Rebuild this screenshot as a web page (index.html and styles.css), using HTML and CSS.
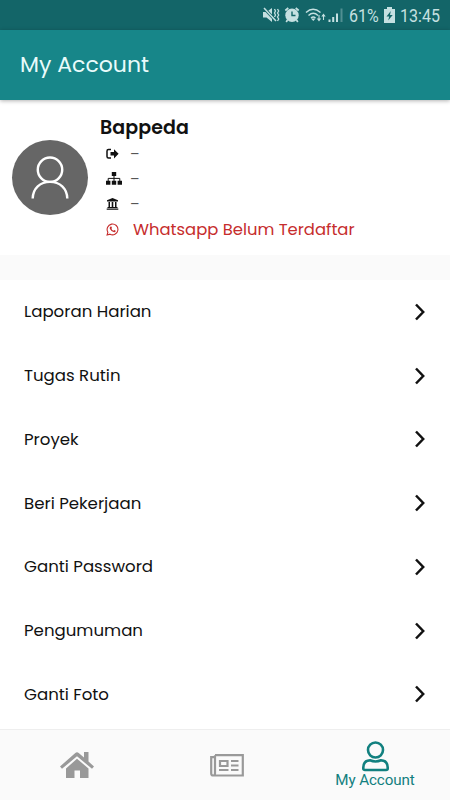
FILE: index.html
```html
<!DOCTYPE html>
<html lang="id">
<head>
    <meta charset="UTF-8">
    <meta name="viewport" content="width=device-width, initial-scale=1.0">
    <title>My Account</title>
    <link rel="stylesheet" href="styles.css">
</head>
<body>

    <!-- Status bar -->
    <div class="status-bar">
        <svg width="80" height="16" viewBox="0 0 80 16" fill="currentColor">
            <path d="M0 5h3.500L9 1v14L3.500 10.500H0z"/>
            <path d="M1 1l12 13" stroke="#136568" stroke-width="3"/>
            <path d="M1 1l12 13" stroke="currentColor" stroke-width="1.500"/>
            <path d="M11.500 2l1 2-1 2 1 2-1 2M14.500 2l1.200 2-1.200 2 1.200 2-1.200 2 1.200 2-1.200 2" fill="none" stroke="currentColor" stroke-width="1.300"/>
            <circle cx="29" cy="8.300" r="6.700"/>
            <path d="M22.300 3.500l3-2.500M35.700 3.500l-3-2.500M24.500 13l-1.300 2M33.500 13l1.300 2" stroke="currentColor" stroke-width="1.700"/>
            <path d="M29 4.500v4h3.500" fill="none" stroke="#136568" stroke-width="1.400"/>
            <path d="M43 5.500q7-6.500 14.500 0M45.500 8.500q4.800-4.500 9.500 0M48 11q2.300-2 4.500 0" fill="none" stroke="currentColor" stroke-width="1.400"/>
            <path d="M48 11.500l2.300 2.500 2.200-2.500z"/>
            <path d="M56 8v4.500M60.500 8v5" stroke="currentColor" stroke-width="1.100"/>
            <path d="M53.800 11.500h4.400L56 14.500zM58.300 9.500h4.400l-2.200-3z"/>
            <path d="M65.500 12.500h2V15h-2zM69.200 10h2v5h-2zM73 6.500h2V15h-2z"/>
            <path d="M77.500 1.500h2V15h-2z" opacity=".35"/>
        </svg>
        <span class="battery-text">61%</span>
        <svg width="11" height="16" viewBox="0 0 11 16">
            <path d="M3 0h5v2h3v14H0V2h3z" fill="currentColor"/>
            <path d="M6.800 4L2.500 9.500h2.700L4.200 13.500 8.700 8H6z" fill="#136568"/>
        </svg>
        <span class="clock">13:45</span>
    </div>

    <header class="header">
        <h1>My Account</h1>
    </header>

    <!-- Profile -->
    <section class="profile">
        <div class="avatar">
            <svg width="38" height="43" viewBox="0 0 38 44" fill="none" stroke="#fff" stroke-width="2.500">
                <circle cx="19" cy="14" r="12.500"/>
                <path d="M1.300 43.500C1.500 33 9 26.500 19 26.500S36.500 33 36.700 43.500"/>
            </svg>
        </div>
        <div class="profile-info">
            <h2>Bappeda</h2>
            <div class="info-row">
                <svg width="13" height="12" viewBox="0 0 13 12">
                    <path d="M5 1.500H2.500Q1 1.500 1 3v5.500Q1 10 2.500 10H5" fill="none" stroke="#111" stroke-width="1.500"/>
                    <path d="M4.500 4H8V1.200l4.600 4.600L8 10.400V7.600H4.500z" fill="#111"/>
                </svg>
                <span>–</span>
            </div>
            <div class="info-row wide-icon">
                <svg width="16" height="13" viewBox="0 0 16 13">
                    <path d="M5.800 0h4.400v4H5.800zM0 8.800h4.400v4H0zM5.800 8.800h4.400v4H5.800zM11.600 8.800H16v4h-4.400z" fill="#111"/>
                    <path d="M8 4v5M2.200 9V6.400h11.600V9" fill="none" stroke="#111"/>
                </svg>
                <span>–</span>
            </div>
            <div class="info-row">
                <svg width="13" height="12" viewBox="0 0 13 12" fill="#111">
                    <path d="M6.500 0L12 2.300v1.200H1V2.300zM2.500 4H4v5.300H2.500zM5.700 4h1.600v5.300H5.700zM9 4h1.500v5.300H9zM1.500 9.100h10v1h-10zM.7 10.600h11.600v1.100H.7z"/>
                </svg>
                <span>–</span>
            </div>
            <div class="info-row whatsapp">
                <svg width="13" height="13" viewBox="0 0 13 13">
                    <path d="M1.100 12l.8-2.800A5.400 5.400 0 1 1 4 11.200z" fill="none" stroke="currentColor" stroke-width="1.100"/>
                    <path d="M4.600 3.400l.8.100.6 1.500-.6.800q.7 1.300 2 1.900l.8-.8 1.500.8q0 1.500-1.600 1.600Q5.400 9.100 3.800 5.800 3.300 4.200 4.600 3.400z" fill="currentColor"/>
                </svg>
                <span>Whatsapp Belum Terdaftar</span>
            </div>
        </div>
    </section>

    <!-- Menu -->
    <ul class="menu">
        <li><span>Laporan Harian</span><svg class="chevron" viewBox="0 0 12 18"><path d="M2 1.500L9.200 9 2 16.500"/></svg></li>
        <li><span>Tugas Rutin</span><svg class="chevron" viewBox="0 0 12 18"><path d="M2 1.500L9.200 9 2 16.500"/></svg></li>
        <li><span>Proyek</span><svg class="chevron" viewBox="0 0 12 18"><path d="M2 1.500L9.200 9 2 16.500"/></svg></li>
        <li><span>Beri Pekerjaan</span><svg class="chevron" viewBox="0 0 12 18"><path d="M2 1.500L9.200 9 2 16.500"/></svg></li>
        <li><span>Ganti Password</span><svg class="chevron" viewBox="0 0 12 18"><path d="M2 1.500L9.200 9 2 16.500"/></svg></li>
        <li><span>Pengumuman</span><svg class="chevron" viewBox="0 0 12 18"><path d="M2 1.500L9.200 9 2 16.500"/></svg></li>
        <li><span>Ganti Foto</span><svg class="chevron" viewBox="0 0 12 18"><path d="M2 1.500L9.200 9 2 16.500"/></svg></li>
    </ul>

    <!-- Bottom navigation -->
    <nav class="bottom-nav">
        <a class="nav-item">
            <svg width="34" height="27" viewBox="0 0 34 27" fill="#999">
                <path d="M15.300 1Q17-.5 18.700 1L24 5.500V0h4.500v9.500L34 14.500l-2 2.300L17 4.300 2 16.800l-2-2.300z"/>
                <path d="M17 6.800l11.500 9.700V26H20v-7.500h-5.500V26H6v-9.500z"/>
            </svg>
        </a>
        <a class="nav-item">
            <svg width="34" height="23" viewBox="0 0 34 23" fill="none" stroke="#999" stroke-width="2.200">
                <path d="M5 1.200h27.800v20.300H3.200Q1.200 21.500 1.200 19.500V3.200H5M5 1.200v18.300Q5 21.500 3.200 21.500"/>
                <path d="M10 7h7.500v5H10zM21 7h7.500M21 11.500h7.500M9 16h9.500M21 16h7.500"/>
            </svg>
        </a>
        <a class="nav-item active">
            <svg width="27" height="31" viewBox="0 0 27 31" fill="none" stroke="currentColor" stroke-width="2.600">
                <circle cx="13.500" cy="9" r="7.500"/>
                <path d="M8 19.300Q13.500 21.700 19 19.300 25.500 19.500 25.700 26.500V27.500Q25.700 29 24 29H3Q1.300 29 1.300 27.500V26.500Q1.500 19.500 8 19.300z"/>
            </svg>
            <span>My Account</span>
        </a>
    </nav>

</body>
</html>
```
FILE: styles.css
```css
* {
    box-sizing: border-box;
}

body {
    margin: 0;
    height: 800px;
    display: flex;
    flex-direction: column;
    overflow: hidden;
    background-color: #fff;
    color: #111;
    font-family: Poppins, Inter, sans-serif;
}

svg {
    display: block;
    flex-shrink: 0;
}

.status-bar {
    height: 30px;
    flex-shrink: 0;
    display: flex;
    align-items: center;
    padding-left: 263px;
    background-color: #136568;
    color: #c5e0e1;
    font: 18px/30px Roboto, sans-serif;
}

.battery-text,
.clock {
    transform: scaleX(0.89);
    transform-origin: left;
    padding-top: 1px;
}

.battery-text {
    width: 35px;
    margin-left: 6px;
}

.clock {
    margin-left: 4.5px;
}

.header {
    height: 70px;
    flex-shrink: 0;
    padding-left: 20px;
    background-color: #178689;
    color: #e9fbfb;
    box-shadow: 0 1px 4px rgba(0, 0, 0, 0.3);
}

.header h1 {
    margin: 0;
    font-size: 22px;
    font-weight: 400;
    line-height: 70px;
}

.profile {
    height: 155px;
    flex-shrink: 0;
    display: flex;
    padding: 14px 12px 0;
}

.avatar {
    width: 76px;
    height: 75px;
    margin: 26px 12px 0 0;
    padding-top: 16px;
    display: flex;
    justify-content: center;
    border-radius: 50%;
    background-color: #666;
}

.profile h2 {
    margin: 0;
    font-size: 19px;
    font-weight: 600;
    line-height: 27px;
    letter-spacing: 0.1px;
}

.info-row {
    height: 25px;
    display: flex;
    align-items: center;
    padding-left: 6px;
    color: #555;
    font-size: 14px;
}

.info-row svg {
    margin-right: 11px;
}

.info-row span {
    padding-top: 2px;
}

.info-row.wide-icon svg {
    margin-right: 8px;
}

.info-row.whatsapp {
    color: #c62d2d;
    font-size: 16.4px;
}

.info-row.whatsapp svg {
    margin: 1px 14px 0 0;
}

.menu {
    height: 474px;
    flex-shrink: 0;
    margin: 0;
    padding: 0;
    border-top: 25px solid #fafafa;
    list-style: none;
}

.menu li {
    height: 63.75px;
    display: flex;
    align-items: center;
    justify-content: space-between;
    padding: 0 24px;
    font-size: 16.6px;
}

.chevron {
    width: 12px;
    height: 18px;
    fill: none;
    stroke: #111;
    stroke-width: 2.5;
}

.bottom-nav {
    height: 71px;
    flex-shrink: 0;
    display: flex;
    border-top: 1px solid #eee;
    background-color: #fafafa;
}

.nav-item {
    width: 150px;
    display: flex;
    flex-direction: column;
    align-items: center;
    justify-content: center;
    padding-left: 4px;
}

.nav-item.active {
    padding-left: 0;
    color: #12807f;
    font: 15.2px/17px Roboto, sans-serif;
    letter-spacing: -0.1px;
}
```
